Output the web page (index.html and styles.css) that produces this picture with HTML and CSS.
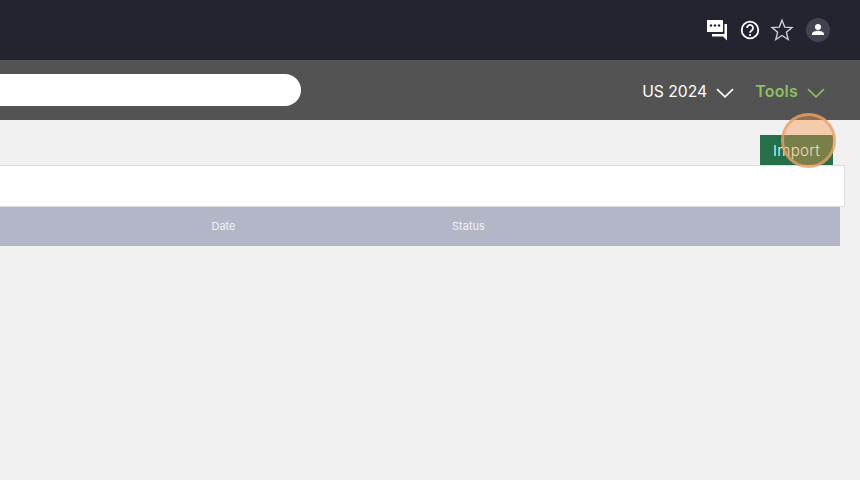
FILE: index.html
```html
<!DOCTYPE html>
<html lang="en">
<head>
<meta charset="utf-8">
<title>Import</title>
<link rel="stylesheet" href="styles.css">
</head>
<body>
<header class="topbar">
  <svg class="icon chat" viewBox="0 0 22 22" width="22" height="22"><path fill="#fff" d="M1 1h15a1 1 0 0 1 1 1v10a1 1 0 0 1-1 1H6l-5 0z"/><path fill="#fff" d="M18.500 5H21v16.500L17 17.500H6V15h12.500z"/><circle cx="5" cy="6.500" r="1.200" fill="#23242f"/><circle cx="9" cy="6.500" r="1.200" fill="#23242f"/><circle cx="13" cy="6.500" r="1.200" fill="#23242f"/></svg>
  <svg class="icon help" viewBox="0 0 20 20" width="20" height="20"><circle cx="10" cy="10" r="8.300" fill="none" stroke="#fff" stroke-width="1.800"/><path fill="none" stroke="#fff" stroke-width="1.800" d="M7 8a3 3 0 1 1 4.700 2.400C10.600 11.200 10 11.700 10 12.800"/><circle cx="10" cy="15" r="1.100" fill="#fff"/></svg>
  <svg class="icon star" viewBox="0 0 24 24" width="24" height="24"><path fill="none" stroke="#cfcfd2" stroke-width="1.400" stroke-linejoin="miter" d="M12 2.200l2.700 6.900 7.300.5-5.600 4.700 1.800 7.200L12 17.500l-6.200 4 1.800-7.200L2 9.600l7.300-.5z"/></svg>
  <span class="avatar"><svg viewBox="0 0 24 24" width="24" height="24"><circle cx="12" cy="9" r="3" fill="#fff"/><path fill="#fff" d="M6 17v-1.300c0-1.800 3.600-2.900 6-2.900s6 1.100 6 2.900V17z"/></svg></span>
</header>
<nav class="navbar">
  <div class="search"></div>
  <div class="menus">
    <span class="menu">US 2024<svg class="chev" viewBox="0 0 18 10" width="18" height="10"><path fill="none" stroke="currentColor" stroke-width="1.600" d="M1 1.200l8 7.600 8-7.600"/></svg></span>
    <span class="menu tools">Tools<svg class="chev" viewBox="0 0 18 10" width="18" height="10"><path fill="none" stroke="currentColor" stroke-width="1.600" d="M1 1.200l8 7.600 8-7.600"/></svg></span>
  </div>
</nav>
<main class="content">
  <div class="actions"><button class="import">Import</button></div>
  <div class="panel"></div>
  <div class="thead"><span class="col-date">Date</span><span class="col-status">Status</span></div>
</main>
<div class="spot"></div>
</body>
</html>
```
FILE: styles.css
```css
* { box-sizing: border-box; }
html, body { margin: 0; height: 100%; }
body {
  width: 860px;
  height: 480px;
  overflow: hidden;
  background: #f1f1f1;
  font-family: Inter, "Open Sans", sans-serif;
  position: relative;
}
.topbar {
  height: 60px;
  background: #23242f;
  display: flex;
  align-items: center;
  justify-content: flex-end;
  padding-right: 30px;
}
.icon { display: block; flex: none; }
.chat { margin-right: 12px; }
.help { margin-right: 10px; }
.star { margin-right: 12px; }
.avatar {
  width: 24px;
  height: 24px;
  border-radius: 50%;
  background: #42434e;
  display: block;
}
.avatar svg { display: block; }
.navbar {
  height: 60px;
  background: #535353;
  display: flex;
  align-items: center;
  justify-content: space-between;
  padding-right: 35px;
}
.search {
  width: 321px;
  height: 32px;
  margin-left: -20px;
  margin-top: -1px;
  background: #fff;
  border-radius: 16px;
}
.menus { display: flex; align-items: center; gap: 21px; }
.menu {
  display: flex;
  align-items: center;
  gap: 9px;
  color: #fff;
  font-size: 15.700px;
  margin-top: 2px;
}
.chev { margin-top: 3px; }
.tools { color: #8bc05a; font-size: 16px; font-weight: 600; letter-spacing: 0.2px; }
.content { padding-top: 15px; }
.actions { display: flex; justify-content: flex-end; padding-right: 27px; }
.import {
  width: 73px;
  height: 30px;
  border: 0;
  padding: 0;
  background: #25704a;
  color: #fff;
  font: 300 15px Inter, sans-serif;
  letter-spacing: 0.35px;
}
.panel {
  width: 845px;
  height: 42px;
  background: #fff;
  border: 1px solid #dcdcdc;
  border-left: 0;
}
.thead {
  width: 840px;
  height: 39px;
  background: #b3b6c6;
  color: #f2f2f5;
  font-size: 11px;
  display: flex;
  align-items: center;
  padding: 0 0 2px 211.500px;
}
.col-date { width: 240.500px; }
.spot {
  position: absolute;
  left: 781px;
  top: 113px;
  width: 55px;
  height: 55px;
  border-radius: 50%;
  background: rgba(244, 150, 70, 0.4);
  border: 3px solid rgba(236, 160, 100, 0.75);
}
```
